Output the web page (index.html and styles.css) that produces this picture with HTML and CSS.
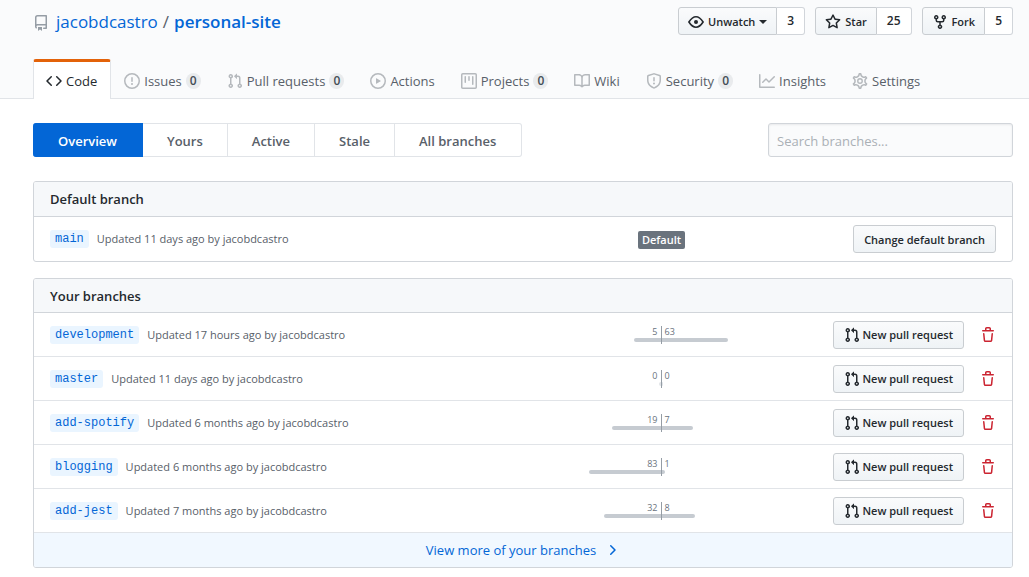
FILE: index.html
```html
<!DOCTYPE html>
<html lang="en">
<head>
<meta charset="utf-8">
<meta name="viewport" content="width=device-width, initial-scale=1">
<title>Branches · jacobdcastro/personal-site</title>
<link rel="stylesheet" href="styles.css">
</head>
<body>
<svg class="sprite" aria-hidden="true">
  <symbol id="repo" viewBox="0 0 16 16"><path fill-rule="evenodd" d="M2 2.5A2.5 2.5 0 014.5 0h8.75a.75.75 0 01.75.75v12.5a.75.75 0 01-.75.75h-2.5a.75.75 0 110-1.5h1.75v-2h-8a1 1 0 00-.714 1.7.75.75 0 01-1.072 1.05A2.495 2.495 0 012 11.5v-9zm10.5-1V9h-8c-.356 0-.694.074-1 .208V2.5a1 1 0 011-1h8zM5 12.25v3.25a.25.25 0 00.4.2l1.45-1.087a.25.25 0 01.3 0L8.6 15.7a.25.25 0 00.4-.2v-3.25a.25.25 0 00-.25-.25h-3.5a.25.25 0 00-.25.25z"/></symbol>
  <symbol id="code" viewBox="0 0 16 16"><path d="M4.72 3.22a.75.75 0 011.06 1.06L2.06 8l3.72 3.72a.75.75 0 11-1.06 1.06L.47 8.53a.75.75 0 010-1.06l4.25-4.25zm6.56 0a.75.75 0 10-1.06 1.06L13.94 8l-3.72 3.72a.75.75 0 101.06 1.06l4.25-4.25a.75.75 0 000-1.06l-4.25-4.25z"/></symbol>
  <symbol id="issue" viewBox="0 0 16 16"><path fill-rule="evenodd" d="M8 1.5a6.5 6.5 0 100 13 6.5 6.5 0 000-13zM0 8a8 8 0 1116 0A8 8 0 010 8zm9 3a1 1 0 11-2 0 1 1 0 012 0zm-.25-6.25a.75.75 0 00-1.5 0v3.5a.75.75 0 001.5 0v-3.5z"/></symbol>
  <symbol id="pull" viewBox="0 0 16 16"><path fill-rule="evenodd" d="M7.177 3.073L9.573.677A.25.25 0 0110 .854v4.792a.25.25 0 01-.427.177L7.177 3.427a.25.25 0 010-.354zM3.75 2.5a.75.75 0 100 1.5.75.75 0 000-1.5zm-2.25.75a2.25 2.25 0 113 2.122v5.256a2.251 2.251 0 11-1.5 0V5.372A2.25 2.25 0 011.5 3.25zM11 2.5h-1V4h1a1 1 0 011 1v5.628a2.251 2.251 0 101.5 0V5A2.5 2.5 0 0011 2.5zm1 10.25a.75.75 0 111.5 0 .75.75 0 01-1.5 0zM3.75 12a.75.75 0 100 1.5.75.75 0 000-1.5z"/></symbol>
  <symbol id="play" viewBox="0 0 16 16"><path fill-rule="evenodd" d="M1.5 8a6.5 6.5 0 1113 0 6.5 6.5 0 01-13 0zM8 0a8 8 0 100 16A8 8 0 008 0zM6.379 5.227A.25.25 0 006 5.442v5.117a.25.25 0 00.379.214l4.264-2.559a.25.25 0 000-.428L6.379 5.227z"/></symbol>
  <symbol id="project" viewBox="0 0 16 16"><path fill-rule="evenodd" d="M1.75 0A1.75 1.75 0 000 1.75v12.5C0 15.216.784 16 1.75 16h12.5A1.75 1.75 0 0016 14.25V1.75A1.75 1.75 0 0014.25 0H1.75zM1.5 1.75a.25.25 0 01.25-.25h12.5a.25.25 0 01.25.25v12.5a.25.25 0 01-.25.25H1.75a.25.25 0 01-.25-.25V1.75zM11.75 3a.75.75 0 00-.75.75v7.5a.75.75 0 001.5 0v-7.5a.75.75 0 00-.75-.75zm-8.25.75a.75.75 0 011.5 0v5.5a.75.75 0 01-1.5 0v-5.5zM8 3a.75.75 0 00-.75.75v3.5a.75.75 0 001.5 0v-3.5A.75.75 0 008 3z"/></symbol>
  <symbol id="book" viewBox="0 0 16 16"><path fill-rule="evenodd" d="M0 1.75A.75.75 0 01.75 1h4.253c1.227 0 2.317.59 3 1.501A3.744 3.744 0 0111.006 1h4.245a.75.75 0 01.75.75v10.5a.75.75 0 01-.75.75h-4.507a2.25 2.25 0 00-1.591.659l-.622.621a.75.75 0 01-1.06 0l-.622-.621A2.25 2.25 0 005.258 13H.75a.75.75 0 01-.75-.75V1.75zm8.755 3a2.25 2.25 0 012.25-2.25H14.5v9h-3.757c-.71 0-1.4.201-1.992.572l.004-7.322zm-1.504 7.324l.004-5.073-.002-2.253A2.25 2.25 0 005.003 2.5H1.5v9h3.757a3.75 3.75 0 011.994.574z"/></symbol>
  <symbol id="shield" viewBox="0 0 16 16"><path fill-rule="evenodd" d="M7.467.133a1.75 1.75 0 011.066 0l5.25 1.68A1.75 1.75 0 0115 3.48V7c0 1.566-.32 3.182-1.303 4.682-.983 1.498-2.585 2.813-5.032 3.855a1.7 1.7 0 01-1.33 0c-2.447-1.042-4.049-2.357-5.032-3.855C1.32 10.182 1 8.566 1 7V3.48a1.75 1.75 0 011.217-1.667l5.25-1.68zm.61 1.429a.25.25 0 00-.153 0l-5.25 1.68a.25.25 0 00-.174.238V7c0 1.358.275 2.666 1.057 3.86.784 1.194 2.121 2.34 4.366 3.297a.2.2 0 00.154 0c2.245-.956 3.582-2.104 4.366-3.298C13.225 9.666 13.5 8.36 13.5 7V3.48a.25.25 0 00-.174-.237l-5.25-1.68zM9 10.5a1 1 0 11-2 0 1 1 0 012 0zm-.25-5.75a.75.75 0 10-1.5 0v3a.75.75 0 001.5 0v-3z"/></symbol>
  <symbol id="graph" viewBox="0 0 16 16"><path fill-rule="evenodd" d="M1.5 1.75a.75.75 0 00-1.5 0v12.5c0 .414.336.75.75.75h14.5a.75.75 0 000-1.5H1.5V1.75zm14.28 2.53a.75.75 0 00-1.06-1.06L10 7.94 7.53 5.47a.75.75 0 00-1.06 0L3.22 8.72a.75.75 0 001.06 1.06L7 7.06l2.47 2.47a.75.75 0 001.06 0l5.25-5.25z"/></symbol>
  <symbol id="gear" viewBox="0 0 16 16"><g fill="none" stroke="currentColor" stroke-width="1.4"><path transform="translate(-.88 -.88) scale(1.11)" d="M7.429 1.525a6.593 6.593 0 011.142 0c.036.003.108.036.137.146l.289 1.105c.147.56.55.967.997 1.189.174.086.341.183.501.29.417.278.97.423 1.53.27l1.102-.303c.11-.03.175.016.195.046.219.31.41.641.573.989.014.031.022.11-.059.19l-.815.806c-.411.406-.562.957-.53 1.456a4.588 4.588 0 010 .582c-.032.499.119 1.05.53 1.456l.815.806c.08.08.073.159.059.19a6.494 6.494 0 01-.573.99c-.02.029-.086.074-.195.045l-1.103-.303c-.559-.153-1.112-.008-1.529.27-.16.107-.327.204-.5.29-.449.222-.851.628-.998 1.189l-.289 1.105c-.029.11-.101.143-.137.146a6.613 6.613 0 01-1.142 0c-.036-.003-.108-.037-.137-.146l-.289-1.105c-.147-.56-.55-.967-.997-1.189a4.502 4.502 0 01-.501-.29c-.417-.278-.97-.423-1.53-.27l-1.102.303c-.11.03-.175-.016-.195-.046a6.492 6.492 0 01-.573-.989c-.014-.031-.022-.11.059-.19l.815-.806c.411-.406.562-.957.53-1.456a4.587 4.587 0 010-.582c.032-.499-.119-1.05-.53-1.456l-.815-.806c-.08-.08-.073-.159-.059-.19a6.44 6.44 0 01.573-.99c.02-.029.086-.075.195-.045l1.103.303c.559.153 1.112.008 1.529-.27.16-.107.327-.204.5-.29.449-.222.851-.628.998-1.189l.289-1.105c.029-.11.101-.143.137-.146z"/><circle cx="8" cy="8" r="2.25"/></g></symbol>
  <symbol id="eye" viewBox="0 0 16 16"><path fill="none" stroke="currentColor" stroke-width="1.6" d="M.9 8C1.6 6.9 4.3 2.8 8 2.8S14.4 6.9 15.1 8C14.4 9.1 11.7 13.2 8 13.2S1.6 9.1.9 8z"/><circle cx="8" cy="8" r="2"/></symbol>
  <symbol id="star" viewBox="0 0 16 16"><path fill-rule="evenodd" d="M8 .25a.75.75 0 01.673.418l1.882 3.815 4.21.612a.75.75 0 01.416 1.279l-3.046 2.97.719 4.192a.75.75 0 01-1.088.791L8 12.347l-3.766 1.98a.75.75 0 01-1.088-.79l.72-4.194L.818 6.374a.75.75 0 01.416-1.28l4.21-.611L7.327.668A.75.75 0 018 .25zm0 2.445L6.615 5.5a.75.75 0 01-.564.41l-3.097.45 2.24 2.184a.75.75 0 01.216.664l-.528 3.084 2.769-1.456a.75.75 0 01.698 0l2.77 1.456-.53-3.084a.75.75 0 01.216-.664l2.24-2.183-3.096-.45a.75.75 0 01-.564-.41L8 2.694z"/></symbol>
  <symbol id="fork" viewBox="0 0 16 16"><path fill-rule="evenodd" d="M5 3.25a.75.75 0 11-1.5 0 .75.75 0 011.5 0zm0 2.122a2.25 2.25 0 10-1.5 0v.878A2.25 2.25 0 005.75 8.5h1.5v2.128a2.251 2.251 0 101.5 0V8.5h1.5a2.25 2.25 0 002.25-2.25v-.878a2.25 2.25 0 10-1.5 0v.878a.75.75 0 01-.75.75h-4.5A.75.75 0 015 6.25v-.878zm3.75 7.378a.75.75 0 11-1.5 0 .75.75 0 011.5 0zm3-8.75a.75.75 0 100-1.5.75.75 0 000 1.5z"/></symbol>
  <symbol id="trash" viewBox="0 0 16 16"><path fill-rule="evenodd" d="M6.5 1.75a.25.25 0 01.25-.25h2.5a.25.25 0 01.25.25V3h-3V1.75zm4.5 0V3h2.25a.75.75 0 010 1.5H2.75a.75.75 0 010-1.5H5V1.75C5 .784 5.784 0 6.75 0h2.5C10.216 0 11 .784 11 1.75zM4.496 6.675a.75.75 0 10-1.492.15l.66 6.6A1.75 1.75 0 005.405 15h5.19c.9 0 1.652-.681 1.741-1.576l.66-6.6a.75.75 0 00-1.492-.149l-.66 6.6a.25.25 0 01-.249.225h-5.19a.25.25 0 01-.249-.225l-.66-6.6z"/></symbol>
  <symbol id="chevron" viewBox="0 0 16 16"><path d="M6.22 3.22a.75.75 0 011.06 0l4.25 4.25a.75.75 0 010 1.06l-4.25 4.25a.75.75 0 01-1.06-1.06L9.94 8 6.22 4.28a.75.75 0 010-1.06z"/></symbol>
</svg>

<header class="repo-head">
  <div class="repo-head-top">
    <h1 class="repo-title">
      <svg class="icon"><use href="#repo"/></svg>
      <a href="#">jacobdcastro</a><span class="slash">/</span><a class="repo-name" href="#">personal-site</a>
    </h1>
    <div class="repo-actions">
      <div class="btn-group"><button class="btn"><svg class="icon"><use href="#eye"/></svg>Unwatch<span class="caret"></span></button><a class="count" href="#">3</a></div>
      <div class="btn-group"><button class="btn"><svg class="icon"><use href="#star"/></svg>Star</button><a class="count" href="#">25</a></div>
      <div class="btn-group"><button class="btn"><svg class="icon"><use href="#fork"/></svg>Fork</button><a class="count" href="#">5</a></div>
    </div>
  </div>
  <nav class="tabs" aria-label="Repository">
    <a class="tab current" href="#"><svg class="icon"><use href="#code"/></svg>Code</a>
    <a class="tab" href="#"><svg class="icon"><use href="#issue"/></svg>Issues<span class="counter">0</span></a>
    <a class="tab" href="#"><svg class="icon"><use href="#pull"/></svg>Pull requests<span class="counter">0</span></a>
    <a class="tab" href="#"><svg class="icon"><use href="#play"/></svg>Actions</a>
    <a class="tab" href="#"><svg class="icon"><use href="#project"/></svg>Projects<span class="counter">0</span></a>
    <a class="tab" href="#"><svg class="icon"><use href="#book"/></svg>Wiki</a>
    <a class="tab" href="#"><svg class="icon"><use href="#shield"/></svg>Security<span class="counter">0</span></a>
    <a class="tab" href="#"><svg class="icon"><use href="#graph"/></svg>Insights</a>
    <a class="tab" href="#"><svg class="icon"><use href="#gear"/></svg>Settings</a>
  </nav>
</header>

<main class="content">
  <div class="toolbar">
    <nav class="subnav" aria-label="Branches">
      <a class="subnav-item selected" href="#">Overview</a>
      <a class="subnav-item" href="#">Yours</a>
      <a class="subnav-item" href="#">Active</a>
      <a class="subnav-item" href="#">Stale</a>
      <a class="subnav-item" href="#">All branches</a>
    </nav>
    <input class="search" type="search" placeholder="Search branches..." aria-label="Search branches">
  </div>

  <section class="box box-default">
    <h2 class="box-header">Default branch</h2>
    <div class="row">
      <div class="branch"><a class="chip" href="#">main</a><span class="updated">Updated 11 days ago by jacobdcastro</span></div>
      <div class="status"><span class="badge">Default</span></div>
      <div class="row-actions"><button class="btn">Change default branch</button></div>
    </div>
  </section>

  <section class="box">
    <h2 class="box-header">Your branches</h2>
    <div class="row">
      <div class="branch"><a class="chip" href="#">development</a><span class="updated">Updated 17 hours ago by jacobdcastro</span></div>
      <div class="compare">
        <div class="side behind"><span>5</span><i class="bar" style="width:28%"></i></div>
        <div class="side ahead"><span>63</span><i class="bar" style="width:70%"></i></div>
      </div>
      <div class="row-actions"><button class="btn new-pull"><svg class="icon"><use href="#pull"/></svg>New pull request</button><button class="delete" aria-label="Delete development"><svg class="icon"><use href="#trash"/></svg></button></div>
    </div>
    <div class="row">
      <div class="branch"><a class="chip" href="#">master</a><span class="updated">Updated 11 days ago by jacobdcastro</span></div>
      <div class="compare even">
        <div class="side behind"><span>0</span><i class="bar" style="width:2%"></i></div>
        <div class="side ahead"><span>0</span><i class="bar" style="width:2%"></i></div>
      </div>
      <div class="row-actions"><button class="btn new-pull"><svg class="icon"><use href="#pull"/></svg>New pull request</button><button class="delete" aria-label="Delete master"><svg class="icon"><use href="#trash"/></svg></button></div>
    </div>
    <div class="row">
      <div class="branch"><a class="chip" href="#">add-spotify</a><span class="updated">Updated 6 months ago by jacobdcastro</span></div>
      <div class="compare">
        <div class="side behind"><span>19</span><i class="bar" style="width:51%"></i></div>
        <div class="side ahead"><span>7</span><i class="bar" style="width:33%"></i></div>
      </div>
      <div class="row-actions"><button class="btn new-pull"><svg class="icon"><use href="#pull"/></svg>New pull request</button><button class="delete" aria-label="Delete add-spotify"><svg class="icon"><use href="#trash"/></svg></button></div>
    </div>
    <div class="row">
      <div class="branch"><a class="chip" href="#">blogging</a><span class="updated">Updated 6 months ago by jacobdcastro</span></div>
      <div class="compare">
        <div class="side behind"><span>83</span><i class="bar" style="width:76%"></i></div>
        <div class="side ahead"><span>1</span><i class="bar" style="width:4%"></i></div>
      </div>
      <div class="row-actions"><button class="btn new-pull"><svg class="icon"><use href="#pull"/></svg>New pull request</button><button class="delete" aria-label="Delete blogging"><svg class="icon"><use href="#trash"/></svg></button></div>
    </div>
    <div class="row">
      <div class="branch"><a class="chip" href="#">add-jest</a><span class="updated">Updated 7 months ago by jacobdcastro</span></div>
      <div class="compare">
        <div class="side behind"><span>32</span><i class="bar" style="width:60%"></i></div>
        <div class="side ahead"><span>8</span><i class="bar" style="width:35%"></i></div>
      </div>
      <div class="row-actions"><button class="btn new-pull"><svg class="icon"><use href="#pull"/></svg>New pull request</button><button class="delete" aria-label="Delete add-jest"><svg class="icon"><use href="#trash"/></svg></button></div>
    </div>
    <a class="more" href="#">View more of your branches<svg class="icon"><use href="#chevron"/></svg></a>
  </section>
</main>
</body>
</html>
```
FILE: styles.css
```css
* { box-sizing: border-box; }

body {
  margin: 0;
  background: #fff;
  color: #24292e;
  font: 13px/20px "Open Sans", "Noto Sans", sans-serif;
}

a { color: #0366d6; text-decoration: none; }

.sprite { display: none; }

.icon {
  width: 16px;
  height: 16px;
  flex: none;
  fill: currentColor;
}

/* Repository header */
.repo-head {
  padding: 7px 16px 0 33px;
  background: #fafbfc;
  border-bottom: 1px solid #e1e4e8;
}

.repo-head-top {
  display: flex;
  justify-content: space-between;
  align-items: flex-start;
  margin-bottom: 24px;
}

.repo-title {
  display: flex;
  align-items: center;
  margin: 0;
  padding-top: 1px;
  font-size: 17px;
  font-weight: 400;
  line-height: 27px;
}

.repo-title .icon { margin: 2px 7px 0 0; color: #959da5; }
.slash { margin: 0 5px; color: #586069; }
.repo-name { font-weight: 600; }

.repo-actions { display: flex; gap: 10px; }
.btn-group { display: flex; }

.btn {
  display: flex;
  align-items: center;
  gap: 4px;
  height: 28px;
  padding: 1px 10px 0;
  border: 1px solid #c9cdd1;
  border-radius: 3px;
  background: linear-gradient(#fafbfc, #eff3f6);
  color: #24292e;
  font: 600 11px/20px "Open Sans", "Noto Sans", sans-serif;
  white-space: nowrap;
}

.btn-group .btn { padding: 1px 9px 0; border-radius: 3px 0 0 3px; }
.new-pull { gap: 2px; }

.count {
  padding: 3px 10px;
  border: 1px solid #d1d5da;
  border-left: 0;
  border-radius: 0 3px 3px 0;
  background: #fff;
  color: #24292e;
  font-size: 12px;
  font-weight: 600;
}

.caret {
  border: 4px solid transparent;
  border-top-color: currentColor;
  border-bottom: 0;
}

.tabs { display: flex; margin-bottom: -1px; }

.tab {
  display: flex;
  align-items: center;
  gap: 4px;
  height: 40px;
  padding: 0 12px;
  border: 1px solid transparent;
  border-top-width: 3px;
  border-bottom: 0;
  color: #586069;
  white-space: nowrap;
}

.tab .icon { color: #b5b9bd; }

.tab.current {
  padding-right: 13px;
  border-color: #e36209 #e1e4e8 transparent;
  border-radius: 3px 3px 0 0;
  background: #fff;
  color: #24292e;
}

.tab.current .icon { color: inherit; }

.counter {
  min-width: 15px;
  border-radius: 8px;
  background: #e9ebed;
  color: #444d56;
  font-size: 12px;
  font-weight: 600;
  line-height: 16px;
  text-align: center;
}

/* Branch filters */
.content { padding: 24px 16px 8px 33px; }

.toolbar {
  display: flex;
  justify-content: space-between;
  margin-bottom: 24px;
}

.subnav { display: flex; }

.subnav-item {
  padding: 7px 24px 5px;
  border: 1px solid #e1e4e8;
  border-left: 0;
  color: #586069;
  font-weight: 600;
}

.subnav-item:last-child { padding-right: 25px; border-radius: 0 3px 3px 0; }

.subnav-item.selected {
  padding-left: 25px;
  padding-right: 25px;
  border-color: #0366d6;
  border-radius: 3px 0 0 3px;
  background: #0366d6;
  color: #fff;
}

.search {
  width: 245px;
  height: 34px;
  padding: 7px 8px 5px;
  border: 1px solid #d1d5da;
  border-radius: 3px;
  background: #fafbfc;
  box-shadow: inset 0 1px 2px rgba(27, 31, 35, .08);
  color: #24292e;
  font: inherit;
}

.search::placeholder { color: #aab0b6; opacity: 1; }

/* Branch lists */
.box {
  margin-bottom: 16px;
  border: 1px solid #d1d5da;
  border-radius: 3px;
  overflow: hidden;
}

.box:last-child { margin-bottom: 0; }

.box-header {
  margin: 0;
  padding: 7px 16px 6px;
  border-bottom: 1px solid #d1d5da;
  background: #f6f8fa;
  font-size: 13px;
  font-weight: 600;
}

.box-default .box-header { padding-bottom: 7px; }

.row {
  display: grid;
  grid-template-columns: 1fr 191px 239px;
  align-items: center;
  min-height: 44px;
  padding: 0 16px;
  border-bottom: 1px solid #e1e4e8;
}

.row:last-child { border-bottom: 0; }

.branch { display: flex; align-items: center; gap: 8px; }

.chip {
  padding: 0 5px;
  border-radius: 3px;
  background: #eaf5ff;
  font: 12px/18px "Liberation Mono", monospace;
}

.updated { color: #586069; font-size: 11px; }

.status { text-align: center; }

.badge {
  display: inline-block;
  padding: 0 4px;
  border-radius: 2px;
  background: #6a737d;
  color: #fff;
  font-size: 11px;
  font-weight: 600;
  line-height: 18px;
}

.compare {
  display: grid;
  grid-template-columns: 1fr 1fr;
  color: #6a737d;
  font-size: 9px;
  line-height: 12px;
}

.side { display: flex; flex-direction: column; height: 18px; }
.side span { padding: 0 3px; }
.behind { align-items: flex-end; border-right: 1px solid #959da5; }
.bar { height: 4px; background: #c6cbd1; }
.behind .bar { border-radius: 2px 0 0 2px; }
.ahead .bar { border-radius: 0 2px 2px 0; }
.even .bar { background: #e1e4e8; }

.row-actions { display: flex; justify-content: flex-end; align-items: center; }

.delete {
  display: flex;
  margin-left: 16px;
  padding: 0;
  border: 0;
  background: none;
  color: #cb2431;
}

.more {
  display: flex;
  justify-content: center;
  align-items: center;
  gap: 8px;
  padding: 7px 0;
  background: #f1f8ff;
}
```
